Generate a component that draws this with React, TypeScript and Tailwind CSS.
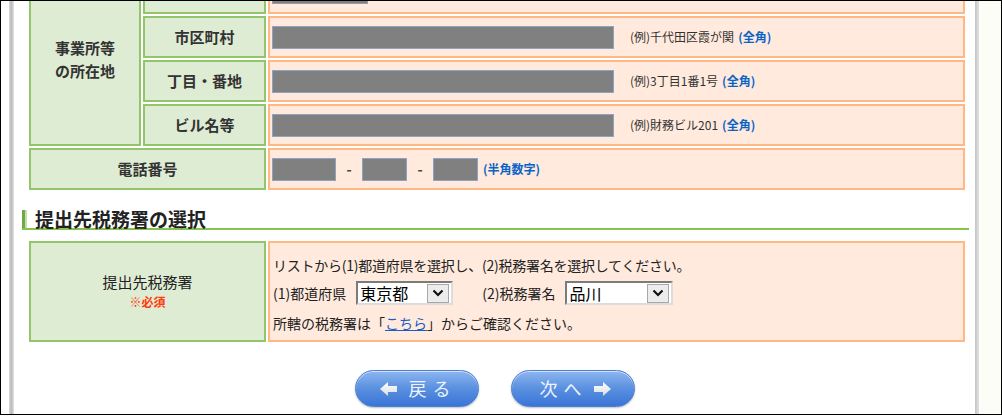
import React from 'react';

const jp = "font-['Noto_Sans_CJK_JP','Noto_Sans',sans-serif]";

const labelCell =
  'bg-[#dfecd4] border-2 border-[#93c66a] flex items-center justify-center text-[15px] font-bold text-[#333]';
const inputCell = 'bg-[#ffeadd] border-2 border-[#ffb884] flex items-center pl-[2px]';

const GrayInput = ({ w }: { w: string }) => (
  <div className={`${w} h-[23px] bg-[#808080] border border-[#8aa5c4]`} />
);

const Note = ({ text }: { text: string }) => (
  <span className="ml-[16px] text-[12px] text-[#333]">
    {text}
    <span className="ml-[4px] font-bold text-[#0a64c8]">(全角)</span>
  </span>
);

const FakeSelect = ({ value, w }: { value: string; w: string }) => (
  <div
    className={`${w} h-[24px] flex items-center bg-white border-2 border-t-[#7b7b7b] border-l-[#7b7b7b] border-b-[#dcdcdc] border-r-[#dcdcdc]`}
  >
    <span className="flex-1 pl-[2px] text-[16px] leading-[20px] text-black">{value}</span>
    <div className="w-[22px] h-[19px] mr-[2px] flex items-center justify-center bg-[#ececec] border border-[#a8a8a8]">
      <svg width="12" height="8" viewBox="0 0 12 8">
        <path d="M1.5 1.5 L6 6 L10.5 1.5" fill="none" stroke="#111" strokeWidth="2.2" />
      </svg>
    </div>
  </div>
);

const Arrow = ({ dir }: { dir: 'left' | 'right' }) => (
  <svg width="17" height="14" viewBox="0 0 17 14" className={dir === 'right' ? '' : '-scale-x-100'}>
    <defs>
      <linearGradient id={`ag-${dir}`} x1="0" y1="0" x2="0" y2="1">
        <stop offset="0" stopColor="#ffffff" />
        <stop offset="1" stopColor="#d9dde4" />
      </linearGradient>
    </defs>
    <polygon points="0,4 9,4 9,0 17,7 9,14 9,10 0,10" fill={`url(#ag-${dir})`} />
  </svg>
);

const PillButton = ({ children }: { children: React.ReactNode }) => (
  <button className="w-[124px] h-[37px] rounded-full border border-[#4b7fcf] bg-gradient-to-b from-[#8db6f0] via-[#5a90e0] to-[#3a74d6] shadow-[inset_0_1px_0_rgba(255,255,255,0.6),0_1px_2px_rgba(0,0,0,0.25)] flex items-center text-[18px] tracking-[6px] text-[#eef4ff]">
    {children}
  </button>
);

export default function App() {
  return (
    <div className={`w-[1002px] h-[415px] border border-black bg-white flex overflow-hidden ${jp}`}>
      <div className="w-[8px] shrink-0" />
      <div className="w-[5px] shrink-0 bg-gradient-to-r from-[#d6d6d6] via-[#bcbcbc] to-[#e4e4e4]" />

      <div className="w-[961px] shrink-0 flex flex-col overflow-hidden">
        {/* 事業所等の所在地 */}
        <div className="pl-[15px] -mt-[29px] grid grid-cols-[112px_123px_697px] grid-rows-[42px_42px_42px_42px_42px] gap-[2px]">
          <div className={`${labelCell} row-span-4 flex-col leading-[23px]`}>
            <span>事業所等</span>
            <span>の所在地</span>
          </div>

          <div className={labelCell} />
          <div className={`${inputCell} items-start`}>
            <div className="mt-[6px] w-[96px] h-[24px] flex bg-white border border-[#9a9a9a]">
              <div className="flex-1 bg-[#808080]" />
            </div>
          </div>

          <div className={labelCell}>市区町村</div>
          <div className={inputCell}>
            <GrayInput w="w-[342px]" />
            <Note text="(例)千代田区霞が関" />
          </div>

          <div className={labelCell}>丁目・番地</div>
          <div className={inputCell}>
            <GrayInput w="w-[342px]" />
            <Note text="(例)3丁目1番1号" />
          </div>

          <div className={labelCell}>ビル名等</div>
          <div className={inputCell}>
            <GrayInput w="w-[342px]" />
            <Note text="(例)財務ビル201" />
          </div>

          <div className={`${labelCell} col-span-2`}>電話番号</div>
          <div className={inputCell}>
            <GrayInput w="w-[64px]" />
            <span className="w-[26px] text-center text-[14px] font-bold text-[#444]">-</span>
            <GrayInput w="w-[45px]" />
            <span className="w-[26px] text-center text-[14px] font-bold text-[#444]">-</span>
            <GrayInput w="w-[45px]" />
            <span className="ml-[5px] text-[12px] font-bold text-[#0a64c8]">(半角数字)</span>
          </div>
        </div>

        {/* 見出し */}
        <div className="ml-[8px] w-[947px] mt-[20px] border-b-2 border-[#86c24e]">
          <div className="h-[18px] flex items-center">
            <div className="w-[3px] h-[18px] bg-[#6fa846]" />
            <div className="w-[2px] h-[18px] bg-[#c2dfae]" />
            <h2 className="ml-[8px] text-[19px] leading-[18px] font-bold text-[#222]">提出先税務署の選択</h2>
          </div>
        </div>

        {/* 提出先税務署 */}
        <div className="ml-[15px] mt-[11px] flex gap-[2px] h-[101px]">
          <div className="w-[237px] bg-[#dfecd4] border-2 border-[#93c66a] flex flex-col items-center justify-center">
            <span className="text-[15px] leading-[20px] text-[#222]">提出先税務署</span>
            <span className="text-[12px] leading-[20px] font-bold text-[#ff3a0a]">※必須</span>
          </div>
          <div className="w-[697px] bg-[#ffeadd] border-2 border-[#ffb884] pl-[3px] pt-[12px] flex flex-col text-[14px] text-[#222]">
            <p className="leading-[20px] tracking-[-0.25px]">リストから(1)都道府県を選択し、(2)税務署名を選択してください。</p>
            <div className="mt-[6px] h-[24px] flex items-center">
              <span>(1)都道府県</span>
              <div className="ml-[10px]">
                <FakeSelect value="東京都" w="w-[97px]" />
              </div>
              <span className="ml-[29px]">(2)税務署名</span>
              <div className="ml-[10px]">
                <FakeSelect value="品川" w="w-[108px]" />
              </div>
            </div>
            <p className="mt-[8px] leading-[20px]">
              所轄の税務署は「<a className="text-[#1a5dc8] underline">こちら</a>」からご確認ください。
            </p>
          </div>
        </div>

        {/* ボタン */}
        <div className="mt-[28px] flex justify-center gap-[32px]">
          <PillButton>
            <span className="ml-[24px] flex"><Arrow dir="left" /></span>
            <span className="ml-[12px]">戻る</span>
          </PillButton>
          <PillButton>
            <span className="ml-[28px]">次へ</span>
            <span className="ml-[6px] flex"><Arrow dir="right" /></span>
          </PillButton>
        </div>
      </div>

      <div className="w-[4px] shrink-0 bg-gradient-to-r from-[#c4c4c4] to-[#e2e2e2]" />
      <div className="flex-1 bg-[#fdfdf7]" />
    </div>
  );
}
